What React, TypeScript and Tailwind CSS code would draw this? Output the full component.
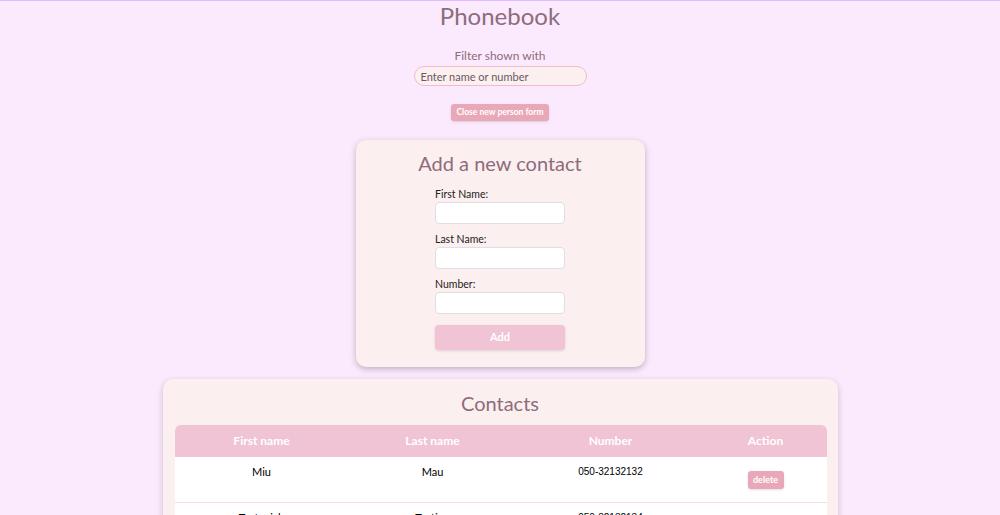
import React from 'react';

const contacts = [
  { first: 'Miu', last: 'Mau', number: '050-32132132' },
  { first: 'Testovich', last: 'Testing', number: '050-32132134' },
];

const FONT = "font-['Comic_Sans_MS',Lato,sans-serif]";

export default function App() {
  return (
    <div className={`min-h-screen bg-[#fbeafd] border-t border-[#dcbcff] text-center ${FONT}`}>
      <h1 className="text-[24px] leading-[30px] text-[#8d6c7c]">Phonebook</h1>

      <div className="mt-[17px] flex flex-col items-center">
        <label className="text-[12px] leading-[16px] text-[#8d6c7c]">Filter shown with</label>
        <input
          className="mt-[2px] w-[173px] h-[20px] rounded-[10px] bg-[#fcefef] border border-[#f0bccb] px-[6px] text-[11px] text-[#555] placeholder:text-[#6a5a60] outline-none"
          placeholder="Enter name or number"
        />
        <button className="mt-[18px] h-[17px] px-[5px] rounded-[3px] bg-[#e8a8b8] text-white text-[8.5px] font-bold shadow-sm">
          Close new person form
        </button>
      </div>

      <div className="mt-[19px] mx-auto w-[289px] rounded-[10px] bg-[#fcefef] shadow-[0_2px_6px_rgba(0,0,0,0.25)] pt-[10px] pb-[17px]">
        <h2 className="text-[20px] leading-[26px] text-[#8d6c7c]">Add a new contact</h2>
        <form className="mx-auto mt-[10px] w-[130px] text-left flex flex-col">
          {['First Name:', 'Last Name:', 'Number:'].map((l, i) => (
            <div key={l} className={i ? 'mt-[7px]' : ''}>
              <label className="block text-[10.5px] leading-[16px] text-[#222]">{l}</label>
              <input className="block w-full h-[22px] rounded-[4px] bg-white border border-[#e2dde0] outline-none" />
            </div>
          ))}
          <button
            type="button"
            className="mt-[11px] h-[25px] w-full rounded-[4px] bg-[#f0c4d4] text-white text-[11px] font-bold shadow-[0_1px_3px_rgba(0,0,0,0.12)]"
          >
            Add
          </button>
        </form>
      </div>

      <div className="mt-[12px] mx-auto w-[675px] rounded-[10px] bg-[#fcefef] shadow-[0_2px_6px_rgba(0,0,0,0.2)] pt-[11px] px-[12px] pb-[20px]">
        <h2 className="text-[20px] leading-[26px] text-[#8d6c7c]">Contacts</h2>
        <table className="mt-[9px] w-full border-collapse table-fixed">
          <colgroup>
            <col className="w-[174px]" />
            <col className="w-[168px]" />
            <col className="w-[188px]" />
            <col className="w-[122px]" />
          </colgroup>
          <thead>
            <tr className="bg-[#f0c4d4] text-white text-[12px] font-bold h-[32px]">
              <th className="rounded-tl-[6px] font-bold">First name</th>
              <th className="font-bold">Last name</th>
              <th className="font-bold">Number</th>
              <th className="rounded-tr-[6px] font-bold">Action</th>
            </tr>
          </thead>
          <tbody>
            {contacts.map((c) => (
              <tr key={c.number} className="bg-white border-b border-[#f3dde4] h-[45px] text-[11px] text-black">
                <td className="align-top pt-[7px]">{c.first}</td>
                <td className="align-top pt-[7px]">{c.last}</td>
                <td className="align-top pt-[7px] text-[10px] font-['Liberation_Sans',Arial,sans-serif]">{c.number}</td>
                <td className="align-top pt-[14px]">
                  <button className="h-[18px] w-[36px] rounded-[3px] bg-[#e8a8b8] text-white text-[9px] font-bold shadow-sm">
                    delete
                  </button>
                </td>
              </tr>
            ))}
          </tbody>
        </table>
      </div>
    </div>
  );
}
